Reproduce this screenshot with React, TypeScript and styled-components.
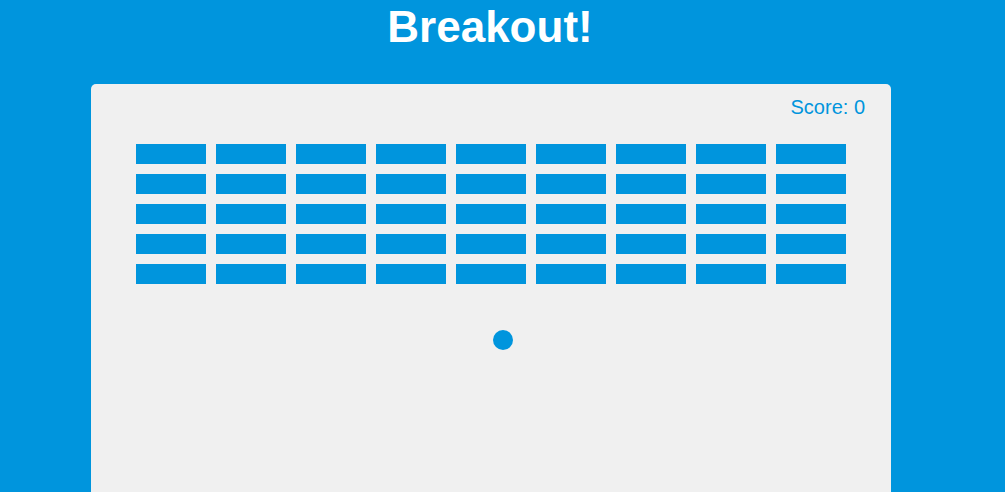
import React from 'react';
import styled, { createGlobalStyle } from 'styled-components';

const GlobalStyle = createGlobalStyle`
  html, body {
    margin: 0;
    padding: 0;
    background: #0095dd;
    font-family: 'Liberation Sans', Arial, sans-serif;
    overflow: hidden;
  }
`;

const Page = styled.div`
  display: flex;
  flex-direction: column;
  align-items: center;
  width: 982px;
`;

const Title = styled.h1`
  margin: 1px 0 0;
  font-size: 44px;
  line-height: 51px;
  font-weight: 700;
  color: #fff;
  transform: translateX(-1px);
`;

const Board = styled.div`
  position: relative;
  margin-top: 32px;
  width: 800px;
  height: 600px;
  background: #f0f0f0;
  border-radius: 5px;
  display: flex;
  flex-direction: column;
`;

const ScoreRow = styled.div`
  display: flex;
  justify-content: flex-end;
  padding: 12px 26px 0 0;
  height: 48px;
  font-size: 20px;
  line-height: 23px;
  color: #0095dd;
`;

const BrickGrid = styled.div`
  display: grid;
  grid-template-columns: repeat(9, 70px);
  grid-auto-rows: 20px;
  gap: 10px;
  padding-left: 45px;
`;

const Brick = styled.div<{ $visible: boolean }>`
  background: ${({ $visible }) => ($visible ? '#0095dd' : 'transparent')};
`;

const Ball = styled.div<{ $x: number; $y: number; $size: number }>`
  position: absolute;
  left: ${({ $x, $size }) => $x - $size / 2}px;
  top: ${({ $y, $size }) => $y - $size / 2}px;
  width: ${({ $size }) => $size}px;
  height: ${({ $size }) => $size}px;
  border-radius: 50%;
  background: #0095dd;
`;

const rows = 5;
const cols = 9;

export default function App() {
  const bricks = Array.from({ length: rows * cols }, (_, i) => ({ id: i, visible: true }));

  return (
    <>
      <GlobalStyle />
      <Page>
        <Title>Breakout!</Title>
        <Board>
          <ScoreRow>Score: 0</ScoreRow>
          <BrickGrid>
            {bricks.map((brick) => (
              <Brick key={brick.id} $visible={brick.visible} />
            ))}
          </BrickGrid>
          <Ball $x={412} $y={256} $size={20} />
        </Board>
      </Page>
    </>
  );
}
